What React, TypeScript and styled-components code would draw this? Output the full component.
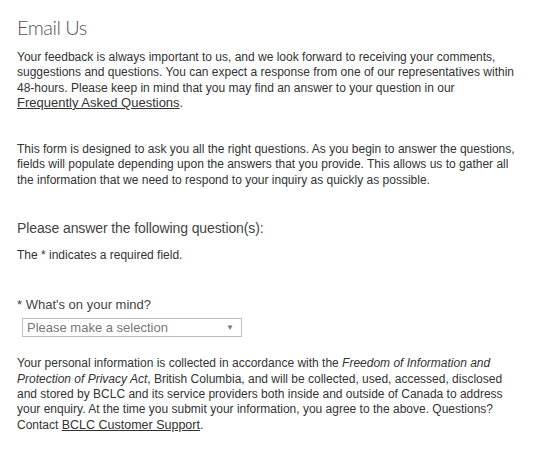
import React from "react";
import styled, { createGlobalStyle } from "styled-components";

const Global = createGlobalStyle`
  html, body { margin: 0; padding: 0; background: #fff; }
  body { font-family: Arial, "Liberation Sans", sans-serif; color: #333; }
`;

const Page = styled.div`
  padding: 14px 17px 0 17px;
  width: 500px;
`;

const Title = styled.h1`
  margin: 0 0 10px 0;
  font-family: Lato, Arial, sans-serif;
  font-size: 20px;
  font-weight: 300;
  color: #555;
  line-height: 26px;
  letter-spacing: -0.5px;
`;

const Para = styled.p<{ $gap?: number }>`
  margin: 0 0 ${(p) => p.$gap ?? 0}px 0;
  font-size: 12px;
  line-height: 15.3px;
`;

const Link = styled.a<{ $size?: number }>`
  color: #333;
  text-decoration: underline;
  font-size: ${(p) => p.$size ?? 13}px;
  line-height: 1;
`;

const SubHeading = styled.h2`
  margin: 0 0 11px 0;
  font-size: 14px;
  font-weight: normal;
  color: #444;
  line-height: 18px;
  letter-spacing: -0.1px;
`;

const FieldLabel = styled.label`
  display: block;
  font-size: 13px;
  color: #444;
  line-height: 16px;
  margin: 0 0 5px 0;
`;

const SelectBox = styled.div`
  margin-left: 5px;
  height: 17px;
  border: 1px solid #bdbdbd;
  display: flex;
  align-items: center;
  justify-content: space-between;
  padding: 0 7px 0 4px;
  box-sizing: content-box;
  width: 207px;
  font-size: 13px;
  color: #777;
  margin-bottom: 19px;
`;

const Arrow = styled.span`
  font-size: 8px;
  color: #777;
`;

export default function App() {
  return (
    <>
      <Global />
      <Page>
        <Title>Email Us</Title>
        <Para $gap={31}>
          Your feedback is always important to us, and we look forward to receiving your comments,
          suggestions and questions. You can expect a response from one of our representatives within
          48-hours. Please keep in mind that you may find an answer to your question in our{" "}
          <Link href="#">Frequently Asked Questions</Link>.
        </Para>
        <Para $gap={31}>
          This form is designed to ask you all the right questions. As you begin to answer the questions,
          fields will populate depending upon the answers that you provide. This allows us to gather all
          the information that we need to respond to your inquiry as quickly as possible.
        </Para>
        <SubHeading>Please answer the following question(s):</SubHeading>
        <Para $gap={34}>The * indicates a required field.</Para>
        <FieldLabel>* What's on your mind?</FieldLabel>
        <SelectBox>
          <span>Please make a selection</span>
          <Arrow>▼</Arrow>
        </SelectBox>
        <Para>
          Your personal information is collected in accordance with the{" "}
          <i>Freedom of Information and Protection of Privacy Act</i>, British Columbia, and will be
          collected, used, accessed, disclosed and stored by BCLC and its service providers both inside
          and outside of Canada to address your enquiry. At the time you submit your information, you
          agree to the above. Questions? Contact <Link href="#" $size={12.5}>BCLC Customer Support</Link>.
        </Para>
      </Page>
    </>
  );
}
